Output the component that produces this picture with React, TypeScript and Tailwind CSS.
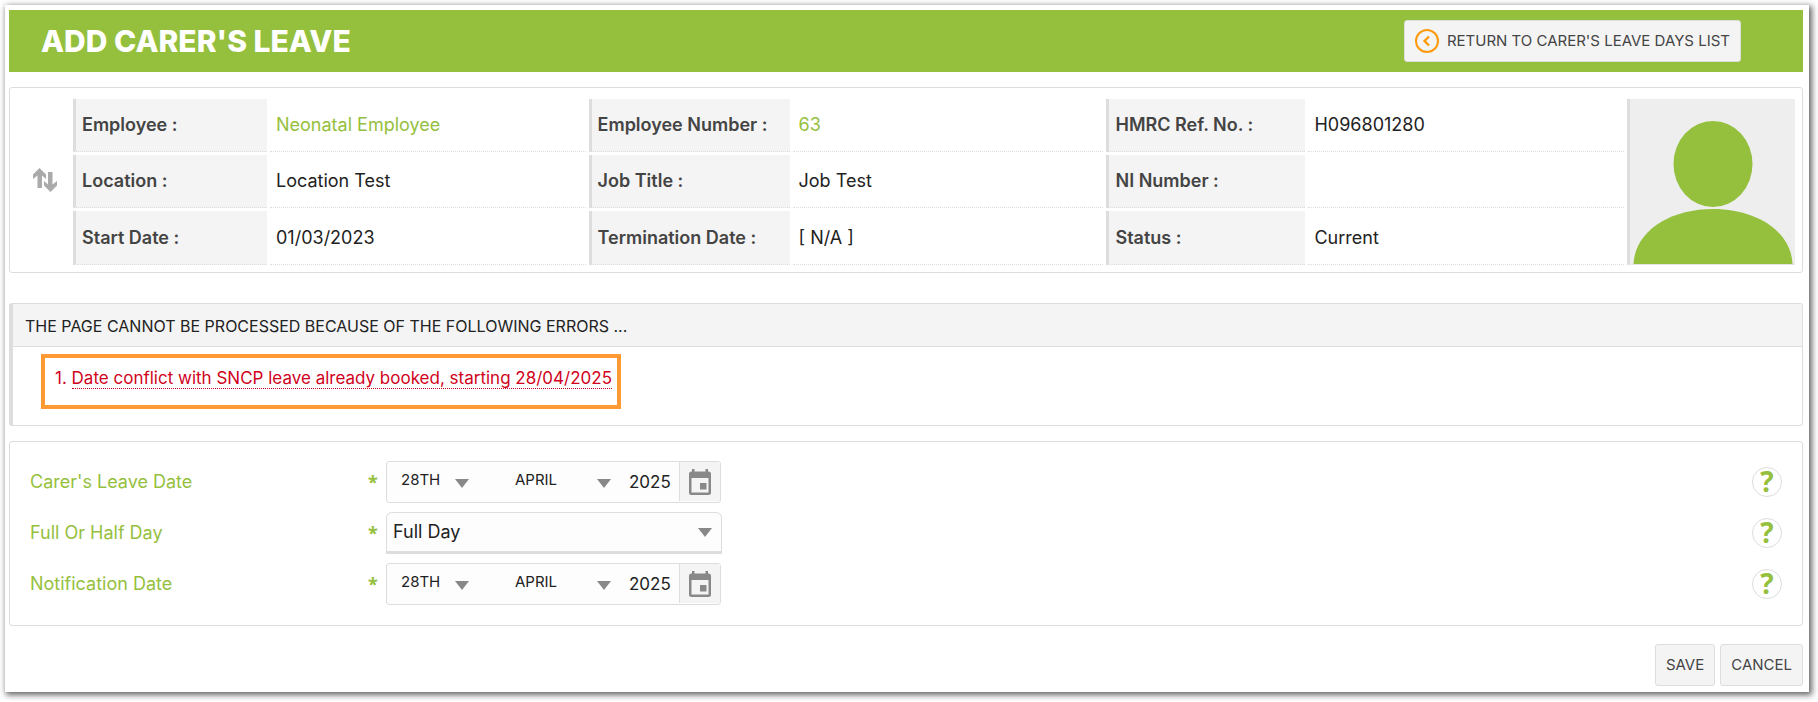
import React, { useState } from 'react';

type Cell = { label: string; value: string; link?: boolean };

const employeeRows: Cell[][] = [
    [
        { label: 'Employee :', value: 'Neonatal Employee', link: true },
        { label: 'Employee Number :', value: '63', link: true },
        { label: 'HMRC Ref. No. :', value: 'H096801280' },
    ],
    [
        { label: 'Location :', value: 'Location Test' },
        { label: 'Job Title :', value: 'Job Test' },
        { label: 'NI Number :', value: '' },
    ],
    [
        { label: 'Start Date :', value: '01/03/2023' },
        { label: 'Termination Date :', value: '[ N/A ]' },
        { label: 'Status :', value: 'Current' },
    ],
];

const months = ['JANUARY', 'FEBRUARY', 'MARCH', 'APRIL', 'MAY', 'JUNE', 'JULY', 'AUGUST', 'SEPTEMBER', 'OCTOBER', 'NOVEMBER', 'DECEMBER'];

const ordinal = (n: number) => {
    if (n > 3 && n < 21) return `${n}TH`;
    return `${n}${['TH', 'ST', 'ND', 'RD'][n % 10] || 'TH'}`;
};

const days = Array.from({ length: 31 }, (_, i) => ordinal(i + 1));

const BackIcon = () => (
    <svg className="h-6 w-6 shrink-0" viewBox="0 0 24 24" fill="none" stroke="#ff9a0c" strokeWidth="2" aria-hidden="true">
        <circle cx="12" cy="12" r="11" />
        <path d="M14 7.5 9.5 12l4.5 4.5" strokeWidth="2.4" />
    </svg>
);

const SwapIcon = () => (
    <svg className="h-6 w-6" viewBox="0 0 24 24" fill="#aaa" aria-hidden="true">
        <path d="M6.500 0 13 6.500V11L9 7.500V20H4.500V7.500L0 11V6.500Z" />
        <path d="M17.500 24 24 17.500V13l-4.500 3.500V4H15v12.500L11 13v4.500Z" />
    </svg>
);

const CalendarIcon = () => (
    <svg className="h-[26px] w-[22px]" viewBox="0 0 22 26" fill="#888" aria-hidden="true">
        <path d="M3 0h2.500v4H3ZM16.500 0H19v4h-2.500Z" />
        <path fillRule="evenodd" d="M2.500 2.500h17A2.500 2.500 0 0 1 22 5v18.500a2.500 2.500 0 0 1-2.500 2.500h-17A2.500 2.500 0 0 1 0 23.500V5A2.500 2.500 0 0 1 2.500 2.500ZM2.500 9v14.500h17V9Z" />
        <path d="M11 14h6.500v6.500H11Z" />
    </svg>
);

const ArrowIcon = ({ className }: { className: string }) => (
    <svg className={`pointer-events-none absolute h-[9px] w-[14px] ${className}`} viewBox="0 0 14 9" fill="#888" aria-hidden="true">
        <path d="M0 0h14L7 9Z" />
    </svg>
);

const Avatar = () => (
    <svg className="block h-[165px] w-full" viewBox="0 0 165 165" fill="#95c03d" aria-hidden="true">
        <ellipse cx="83" cy="65" rx="39.500" ry="43" />
        <path d="M3.500 165C5 132 40 110 83 110s78 22 79.500 55Z" />
    </svg>
);

const FormRow = ({ id, label, children }: { id: string; label: string; children: React.ReactNode }) => (
    <div className="flex h-[42px] items-center">
        <label htmlFor={id} className="w-[338px] text-[#95c03d]">{label}</label>
        <span className="w-[18px] font-['Noto_Sans',sans-serif] font-bold text-[#95c03d]">*</span>
        {children}
        <button type="button" aria-label={`Help: ${label}`} className="ml-auto flex h-[30px] w-[30px] items-center justify-center rounded-full border border-[#ddd] bg-white pb-0.5 font-['Noto_Sans',sans-serif] text-[28px]/7 font-bold text-[#95c03d]">
            ?
        </button>
    </div>
);

const DateField = ({ id, label }: { id: string; label: string }) => {
    const [day, setDay] = useState('28TH');
    const [month, setMonth] = useState('APRIL');
    const [year, setYear] = useState('2025');

    return (
        <div className="flex h-[42px] w-[335px] rounded-[3px] border border-[#ddd] bg-[#fdfdfd]">
            <div className="relative w-[100px]">
                <select id={id} value={day} onChange={(e) => setDay(e.target.value)} className="h-9 w-full appearance-none pl-3.5 text-[15px]">
                    {days.map((d) => <option key={d}>{d}</option>)}
                </select>
                <ArrowIcon className="top-[17px] right-[18px]" />
            </div>
            <div className="relative w-[132px]">
                <select aria-label={`${label} month`} value={month} onChange={(e) => setMonth(e.target.value)} className="h-9 w-full appearance-none pl-7 text-[15px]">
                    {months.map((m) => <option key={m}>{m}</option>)}
                </select>
                <ArrowIcon className="top-[17px] right-2" />
            </div>
            <input aria-label={`${label} year`} value={year} onChange={(e) => setYear(e.target.value)} className="min-w-0 flex-1 pl-2.5 text-[17px]" />
            <button type="button" aria-label={`${label} calendar`} className="mb-px flex w-[41px] items-center justify-center border-l border-[#ddd] bg-[#f4f4f4]">
                <CalendarIcon />
            </button>
        </div>
    );
};

const App: React.FC = () => {
    const [duration, setDuration] = useState('Full Day');

    return (
        <div className="bg-white pt-[5px] pr-[9px] pb-[9px] pl-[5px]">
            <main className="bg-white pt-[5px] pr-1.5 pb-1.5 pl-1 font-['Inter',sans-serif] text-lg/6 text-[#222] shadow-[2px_2px_6px_1px_#666]">
                <header className="flex h-[62px] items-center justify-between bg-[#95c03d] pr-[62px] pl-8">
                    <h1 className="text-[30px]/9 font-extrabold text-white">ADD CARER'S LEAVE</h1>
                    <a href="#list" className="flex h-[42px] items-center gap-2 rounded-[3px] border border-[#ddd] bg-[#f4f4f4] px-2.5 text-[15px] text-[#444]">
                        <BackIcon />
                        RETURN TO CARER'S LEAVE DAYS LIST
                    </a>
                </header>

                {/* Employee summary */}
                <section className="mt-[15px] rounded-[3px] border border-[#ddd] pt-2 pr-1 pb-1 pl-2">
                    <table className="w-full table-fixed border-separate border-spacing-[3px]">
                        <colgroup>
                            <col className="w-[49px]" />
                            <col className="w-[194px]" />
                            <col className="w-[18%]" />
                            <col className="w-[201px]" />
                            <col />
                            <col className="w-[199px]" />
                            <col className="w-[18%]" />
                            <col className="w-[168px]" />
                        </colgroup>
                        <tbody>
                            {employeeRows.map((row, index) => (
                                <tr key={index} className="h-[53px] last:h-[54px]">
                                    {index === 0 && (
                                        <td rowSpan={3} className="pb-1 pl-3 align-middle">
                                            <button type="button" aria-label="Switch employee" className="block"><SwapIcon /></button>
                                        </td>
                                    )}
                                    {row.map((cell) => (
                                        <React.Fragment key={cell.label}>
                                            <th scope="row" className="border-b border-l-3 border-dotted border-[#ddd] bg-[#f4f4f4] pl-1.5 text-left font-semibold text-[#444] [border-left-style:solid]">
                                                {cell.label}
                                            </th>
                                            <td className="border-b border-dotted border-[#ddd] pl-1.5">
                                                {cell.link ? <a href="#employee" className="text-[#95c03d]">{cell.value}</a> : cell.value}
                                            </td>
                                        </React.Fragment>
                                    ))}
                                    {index === 0 && (
                                        <td rowSpan={3} className="border-b border-l-3 border-dotted border-[#ddd] bg-[#eee] align-bottom [border-left-style:solid]">
                                            <Avatar />
                                        </td>
                                    )}
                                </tr>
                            ))}
                        </tbody>
                    </table>
                </section>

                {/* Validation errors */}
                <section className="mt-[30px] rounded-[3px] border border-l-4 border-[#ddd]">
                    <h2 className="border-b border-[#ddd] bg-[#f4f4f4] px-3 pt-[10px] pb-2 text-base/6">
                        THE PAGE CANNOT BE PROCESSED BECAUSE OF THE FOLLOWING ERRORS ...
                    </h2>
                    <div className="px-7 pt-[7px] pb-4">
                        <ol className="h-[55px] w-[580px] border-4 border-[#ff9933] px-2.5 pt-2 text-[17px]/6 whitespace-nowrap text-[#d0021b]">
                            <li>
                                1. <a href="#carers-leave-date" className="border-b border-dotted border-[#d0021b]">Date conflict with SNCP leave already booked, starting 28/04/2025</a>
                            </li>
                        </ol>
                    </div>
                </section>

                {/* Leave details */}
                <form>
                    <div className="mt-[15px] flex flex-col gap-[9px] rounded-[3px] border border-[#ddd] px-5 pt-[19px] pb-5">
                        <FormRow id="carers-leave-date" label="Carer's Leave Date">
                            <DateField id="carers-leave-date" label="Carer's Leave Date" />
                        </FormRow>
                        <FormRow id="full-or-half-day" label="Full Or Half Day">
                            <div className="relative w-[336px]">
                                <select id="full-or-half-day" value={duration} onChange={(e) => setDuration(e.target.value)} className="h-[42px] w-full appearance-none rounded-t-md border border-b-3 border-[#ddd] bg-[#fdfdfd] pl-1.5">
                                    <option>Full Day</option>
                                    <option>Half Day</option>
                                </select>
                                <ArrowIcon className="top-4 right-2.5" />
                            </div>
                        </FormRow>
                        <FormRow id="notification-date" label="Notification Date">
                            <DateField id="notification-date" label="Notification Date" />
                        </FormRow>
                    </div>
                    <div className="mt-[18px] flex justify-end gap-[5px] text-[15px] text-[#444]">
                        <button type="submit" className="h-[42px] rounded-[3px] border border-[#ddd] bg-[#f4f4f4] px-2.5">SAVE</button>
                        <button type="button" className="h-[42px] rounded-[3px] border border-[#ddd] bg-[#f4f4f4] px-2.5">CANCEL</button>
                    </div>
                </form>
            </main>
        </div>
    );
};

export default App;
